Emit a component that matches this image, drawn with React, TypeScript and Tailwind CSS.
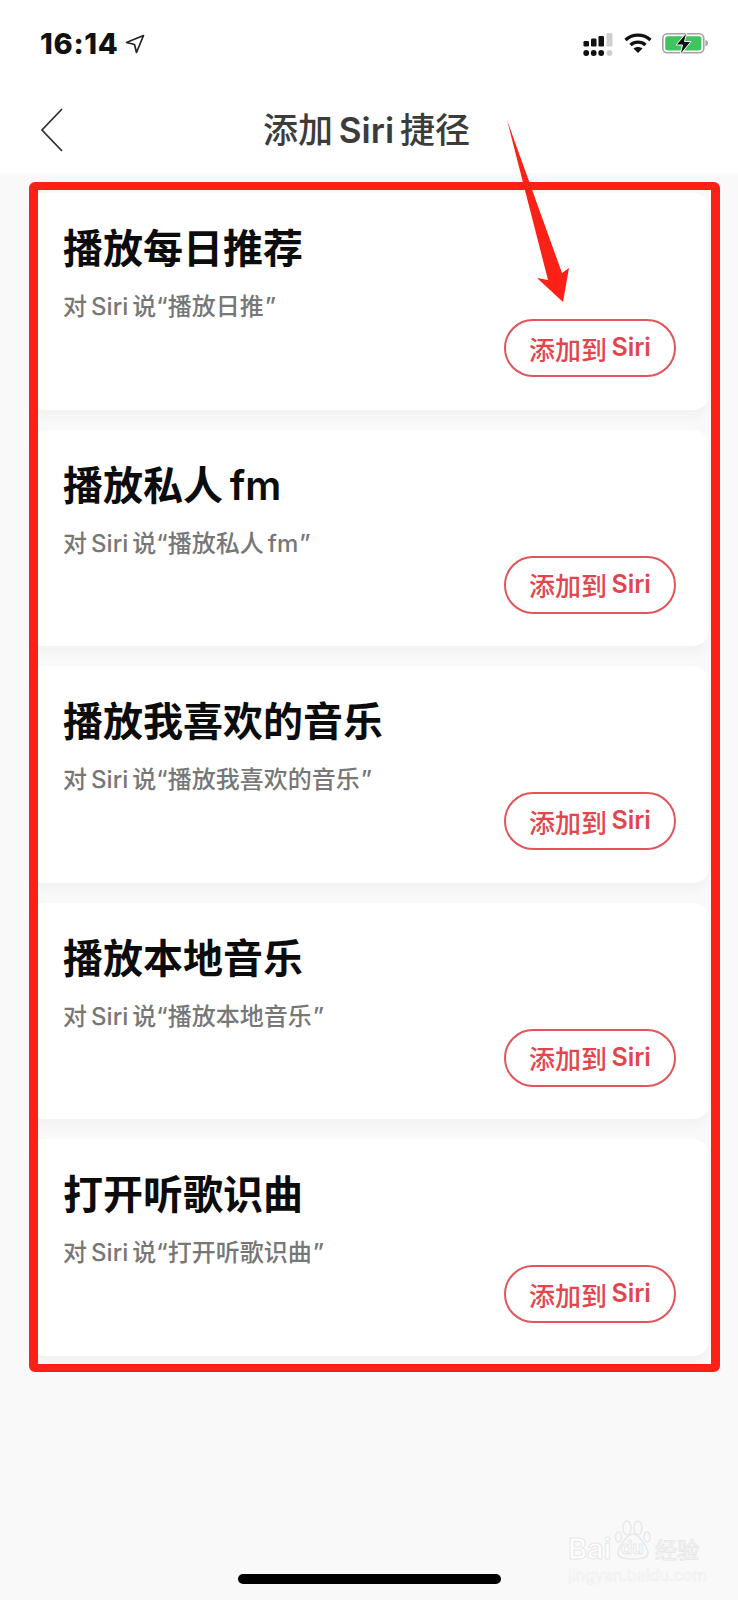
const items = [
  { title: '播放每日推荐', phrase: '播放日推' },
  { title: '播放私人fm', phrase: '播放私人fm' },
  { title: '播放我喜欢的音乐', phrase: '播放我喜欢的音乐' },
  { title: '播放本地音乐', phrase: '播放本地音乐' },
  { title: '打开听歌识曲', phrase: '打开听歌识曲' },
];

// latin words sit in Inter with a narrow gap either side, the rest stays CJK
function Mixed({ text, latinClass = '' }: { text: string; latinClass?: string }) {
  const parts = text.split(/([A-Za-z]+)/);
  return (
    <>
      {parts.map((part, i) =>
        /^[A-Za-z]+$/.test(part) ? (
          <span key={i} className={`mx-[0.17em] font-["Inter",sans-serif] ${latinClass}`}>
            {part}
          </span>
        ) : (
          <span key={i}>{part}</span>
        ),
      )}
    </>
  );
}

function StatusBar() {
  return (
    <div className="flex h-[88px] items-start justify-between pl-[40px] pr-[30px] pt-[29px]">
      <div className="flex items-center gap-[7px]">
        <span className='font-["Inter",sans-serif] text-[29px] font-extrabold leading-[30px] tracking-[0.7px] text-[#111]'>16:14</span>
        <svg width="20" height="20" viewBox="0 0 20 20" fill="none" stroke="#222" strokeWidth="1.7" strokeLinejoin="round">
          <path d="M18.500 1.500 1.500 8.500l8 2 2 8z" />
        </svg>
      </div>
      <div className="flex items-start gap-[10px] pt-[4px]">
        <svg width="31" height="24" viewBox="0 0 31 24" fill="#111">
          <rect x="0.500" y="8" width="5.500" height="5.500" rx="1.200" />
          <rect x="8" y="5.500" width="5.500" height="8" rx="1.200" />
          <rect x="15.500" y="3" width="5.500" height="10.500" rx="1.200" />
          <rect x="23.500" y="0" width="6" height="13.500" rx="1.200" fill="#cfcfcf" />
          <circle cx="3.200" cy="20" r="2.900" />
          <circle cx="10.700" cy="20" r="2.900" />
          <circle cx="18.200" cy="20" r="2.900" />
          <circle cx="26.500" cy="20" r="2.900" fill="#cfcfcf" />
        </svg>
        <svg width="28" height="20" viewBox="0 0 28 20" fill="none" stroke="#111" strokeWidth="3.400">
          <path d="M1.500 7c7-6.500 18-6.500 25 0" />
          <path d="M6.500 12c4.200-3.800 10.800-3.800 15 0" />
          <path d="M14 20 9.500 15.500c2.600-2 6.400-2 9 0z" fill="#111" stroke="none" />
        </svg>
        <svg className="-mt-[1px]" width="46" height="23" viewBox="0 0 46 23">
          <rect x="0.800" y="1.800" width="41" height="19" rx="4.500" fill="#fff" stroke="#a3a3a3" strokeWidth="1.600" />
          <rect x="3.200" y="4.200" width="36.200" height="14.200" rx="2.500" fill="#3fc45e" />
          <path d="M43.500 8v6.500c1.500-.5 2.500-1.800 2.500-3.200S45 8.500 43.500 8z" fill="#a3a3a3" />
          <path d="M25 0 14 13h6.500L18 23l11-13.500h-6.500z" fill="#111" stroke="#fff" strokeWidth="1" />
        </svg>
      </div>
    </div>
  );
}

function NavBar() {
  return (
    <div className="relative flex h-[85px] items-start justify-center pr-[5px]">
      <svg className="absolute left-[38px] top-[19px]" width="28" height="46" viewBox="0 0 28 46" fill="none" stroke="#333" strokeWidth="1.800">
        <path d="M24 2 4 23l20 21" />
      </svg>
      <h1 className="mt-[17px] h-[46px] text-[35px] font-medium leading-[46px] text-[#3c3c3c]">
        <Mixed text="添加Siri捷径" latinClass="font-semibold" />
      </h1>
    </div>
  );
}

function ShortcutCard({ title, phrase }: { title: string; phrase: string }) {
  return (
    <div className="flex h-[216.5px] flex-col rounded-[16px] bg-white pl-[34px] pr-[33px] pt-[27px] shadow-[0_8px_10px_rgba(0,0,0,0.028)]">
      <div className="h-[52px] text-[40px] font-bold leading-[52px] text-[#0c0c0c]">
        <Mixed text={title} latinClass="font-semibold" />
      </div>
      <div className="mt-[18px] h-[30px] text-[24px] font-medium leading-[30px] text-[#777]">
        <Mixed text="对Siri说" />
        <span className='font-["Inter",sans-serif]'>“</span>
        <Mixed text={phrase} latinClass="mr-0" />
        <span className='ml-[1px] font-["Inter",sans-serif]'>”</span>
      </div>
      <div className="-mt-[1px] flex justify-end">
        <button className="flex h-[58px] w-[172px] items-center justify-center rounded-full border-2 border-[#e2555a] text-[26px] font-medium text-[#e2464c]">
          <Mixed text="添加到Siri" latinClass="mr-0 text-[25px] font-semibold" />
        </button>
      </div>
    </div>
  );
}

export default function App() {
  return (
    <div className='relative h-[1600px] w-[738px] overflow-hidden bg-[#f9f9f9] font-["Noto_Sans_CJK_SC",sans-serif]'>
      <div className="bg-white">
        <StatusBar />
        <NavBar />
      </div>

      <div className="flex flex-col gap-[20px] pl-[29px] pr-[29px] pt-[20px]">
        {items.map((item) => (
          <ShortcutCard key={item.title} title={item.title} phrase={item.phrase} />
        ))}
      </div>

      {/* annotation drawn on top of the screenshot */}
      <div className="absolute left-[29px] top-[182px] h-[1190px] w-[691px] rounded-[6px] border-x-[9px] border-y-[8px] border-[#fb2116]" />
      <svg className="absolute left-[500px] top-[115px]" width="80" height="190" viewBox="0 0 80 190" fill="#fb2116">
        <path d="M7 5 62 158 69 153 63 187 37 163 48 165z" />
      </svg>

      {/* home indicator */}
      <div className="absolute left-[238px] top-[1574px] h-[10px] w-[263px] rounded-full bg-black" />

      {/* watermark */}
      <div className="absolute left-[568px] top-[1520px] w-[132px] text-white [-webkit-text-stroke:1px_#e8e8e8]">
        <div className="flex h-[40px] items-end">
          <span className='w-[46px] font-["Inter",sans-serif] text-[29px] font-semibold leading-[22px]'>Bai</span>
          <div className="relative h-[40px] w-[38px] shrink-0">
            <svg width="38" height="40" viewBox="0 0 38 40" fill="none" stroke="#e8e8e8" strokeWidth="1.500">
              <ellipse cx="13" cy="8" rx="4" ry="7" />
              <ellipse cx="24" cy="8" rx="4" ry="7" />
              <ellipse cx="4.500" cy="17" rx="3" ry="5" />
              <ellipse cx="33" cy="17" rx="3" ry="5" />
              <path d="M19 14c-6 0-15 14-15 19 0 5 6 6 15 6s15-1 15-6c0-5-9-19-15-19z" />
            </svg>
            <span className='absolute bottom-[3px] left-[7px] font-["Inter",sans-serif] text-[18px] font-semibold leading-[18px]'>du</span>
          </div>
          <span className="ml-[3px] whitespace-nowrap text-[22px] leading-[24px]">经验</span>
        </div>
        <div className='mt-[8px] whitespace-nowrap font-["Inter",sans-serif] text-[16px] leading-[14px] [-webkit-text-stroke:0.6px_#ececec]'>jingyan.baidu.com</div>
      </div>
    </div>
  );
}
